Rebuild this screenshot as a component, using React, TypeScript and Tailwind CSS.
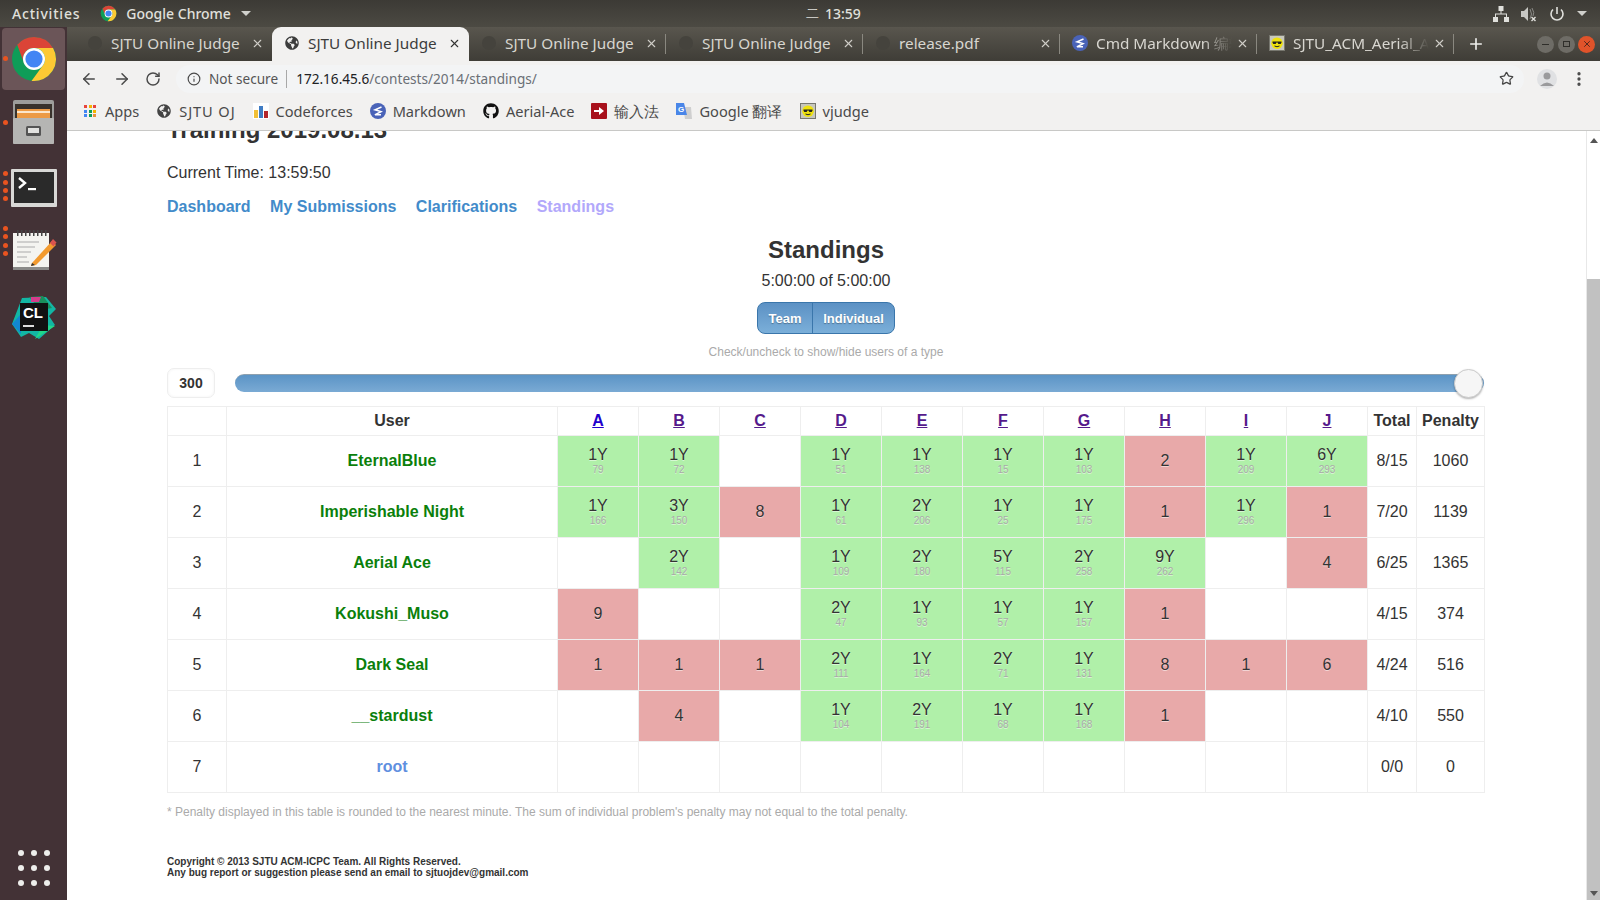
import { ArrowLeft, ArrowRight, Info, MoreVertical, Plus, RotateCw, Star, X } from "lucide-react";
import { FaGithub, FaGlobeAmericas } from "react-icons/fa";

type Cell = string | null;

const PROBLEMS = ["A", "B", "C", "D", "E", "F", "G", "H", "I", "J"];

// "1Y 79" is solved, tries then minutes. A lone number is failed attempts.
const ROWS: { name: string; root?: boolean; cells: Cell[]; total: string; penalty: string }[] = [
  { name: "EternalBlue", cells: ["1Y 79", "1Y 72", null, "1Y 51", "1Y 138", "1Y 15", "1Y 103", "2", "1Y 209", "6Y 293"], total: "8/15", penalty: "1060" },
  { name: "Imperishable Night", cells: ["1Y 166", "3Y 150", "8", "1Y 61", "2Y 206", "1Y 25", "1Y 175", "1", "1Y 296", "1"], total: "7/20", penalty: "1139" },
  { name: "Aerial Ace", cells: [null, "2Y 142", null, "1Y 109", "2Y 180", "5Y 115", "2Y 258", "9Y 262", null, "4"], total: "6/25", penalty: "1365" },
  { name: "Kokushi_Muso", cells: ["9", null, null, "2Y 47", "1Y 93", "1Y 57", "1Y 157", "1", null, null], total: "4/15", penalty: "374" },
  { name: "Dark Seal", cells: ["1", "1", "1", "2Y 111", "1Y 164", "2Y 71", "1Y 131", "8", "1", "6"], total: "4/24", penalty: "516" },
  { name: "__stardust", cells: [null, "4", null, "1Y 104", "2Y 191", "1Y 68", "1Y 168", "1", null, null], total: "4/10", penalty: "550" },
  { name: "root", root: true, cells: [null, null, null, null, null, null, null, null, null, null], total: "0/0", penalty: "0" },
];

function ChromeLogo({ size }: { size: number }) {
  return (
    <svg width={size} height={size} viewBox="0 0 48 48">
      <circle cx="24" cy="24" r="22" fill="#0f9d58" />
      <path d="M24 2a22 22 0 0 1 19.050 11H24a11 11 0 0 0-9.530 16.500L7.200 9.700A22 22 0 0 1 24 2z" fill="#db4437" />
      <path d="M43.050 13A22 22 0 0 1 21.500 45.900L33.530 29.500A11 11 0 0 0 24 13z" fill="#fcc934" />
      <circle cx="24" cy="24" r="11" fill="#fff" />
      <circle cx="24" cy="24" r="8.600" fill="#4285f4" />
    </svg>
  );
}

function MarkdownIcon() {
  return (
    <svg width="16" height="16" viewBox="0 0 16 16">
      <circle cx="8" cy="8" r="8" fill="#4a63b8" />
      <path d="M11.500 4L5 6.800 11 8.600 4.800 11.800M5 11.800h6" stroke="#fff" strokeWidth="1.500" fill="none" />
    </svg>
  );
}

function VjudgeIcon() {
  return (
    <svg width="16" height="16" viewBox="0 0 16 16">
      <rect width="16" height="16" fill="#77776f" />
      <rect x="1" y="1" width="14" height="14" fill="#c8c8bc" />
      <circle cx="8" cy="8.200" r="5.800" fill="#efe20c" />
      <path d="M3.500 6.500h9v1.200l-.8 1.300h-2.400L8.500 7.600h-1L6.700 9H4.300l-.8-1.300z" fill="#222" />
      <path d="M5.500 11q2.500 1.500 5 0" stroke="#222" fill="none" />
    </svg>
  );
}

function Tab({ title, icon, active, fade, noSep }: { title: string; icon?: React.ReactNode; active?: boolean; fade?: boolean; noSep?: boolean }) {
  return (
    <div
      className={`relative flex h-[34px] w-[197px] shrink-0 items-center pb-[2px] pl-[12px] pr-[8px] text-[15.300px] ${
        active ? "rounded-t-[9px] bg-[#f2f1f0] text-[#3c3c3c]" : "text-[#d8d6d0]"
      }`}
    >
      <div className="flex w-[16px] shrink-0 justify-center">
        {icon ?? <span className="size-[14px] rounded-full bg-[#45433d]" />}
      </div>
      <span
        className={`ml-[8px] flex-1 overflow-hidden whitespace-nowrap ${
          fade ? "[mask-image:linear-gradient(to_right,black_78%,transparent_100%)]" : ""
        }`}
      >
        {title}
      </span>
      <X size={13} strokeWidth={2} className={`ml-[4px] shrink-0 ${active ? "text-[#333]" : "text-[#d0cec8]"}`} />
      {!active && !noSep && <span className="absolute right-0 top-[7px] h-[20px] w-px bg-[#8a8880]" />}
    </div>
  );
}

function Bookmark({ icon, label, wide }: { icon: React.ReactNode; label: string; wide?: boolean }) {
  return (
    <div className="flex items-center gap-[7px]">
      <div className="flex w-[16px] justify-center">{icon}</div>
      <span className={wide ? "tracking-[0.9px]" : ""}>{label}</span>
    </div>
  );
}

function LauncherDots({ tops }: { tops: number[] }) {
  return (
    <>
      {tops.map((top) => (
        <span key={top} className="absolute left-[3px] size-[5px] rounded-full bg-[#e95420]" style={{ top }} />
      ))}
    </>
  );
}

function Dock() {
  return (
    <aside className="relative flex w-[67px] shrink-0 flex-col bg-[#433236]">
      <div className="mx-[2px] mt-[1px] flex h-[62px] items-center justify-center rounded-[4px] bg-[#6b5558]">
        <ChromeLogo size={48} />
      </div>
      <LauncherDots tops={[29]} />

      <div className="mt-[10px] flex h-[44px] justify-center">
        <svg width="41" height="44" viewBox="0 0 41 44">
          <rect x="0" y="0" width="41" height="44" rx="2" fill="#9d9d9b" />
          <rect x="2" y="4" width="37" height="18" fill="#38322c" />
          <rect x="4" y="9" width="33" height="9" fill="#ec9a45" />
          <rect x="4" y="11" width="33" height="2" fill="#fbe6cc" />
          <rect x="0" y="18" width="41" height="26" rx="1" fill="#b5b5b3" />
          <rect x="13" y="26" width="15" height="10" rx="1.500" fill="#555" />
          <rect x="15" y="28" width="11" height="5" fill="#e2e2e0" />
        </svg>
      </div>
      <LauncherDots tops={[93]} />

      <div className="mt-[25px] flex h-[38px] justify-center">
        <svg width="46" height="38" viewBox="0 0 46 38">
          <rect width="46" height="38" rx="1" fill="#d8d8d6" />
          <rect x="3" y="3" width="40" height="31" fill="#2a2a2a" />
          <path d="M8 9l6 5-6 5" stroke="#fff" strokeWidth="2.400" fill="none" />
          <rect x="17" y="19" width="8" height="2.200" fill="#fff" />
        </svg>
      </div>
      <LauncherDots tops={[144, 153, 161, 169]} />

      <div className="mt-[22px] flex h-[42px] justify-center">
        <svg width="46" height="42" viewBox="0 0 46 42">
          <rect x="2" y="4" width="36" height="36" fill="#f4f4f0" />
          <rect x="2" y="38" width="36" height="3" fill="#8a8a88" />
          {[6, 10, 14, 18, 22, 26, 30, 34].map((x) => (
            <rect key={x} x={x} y="1" width="1.500" height="6" fill="#444" />
          ))}
          <path d="M6 13h22M6 18h18M6 23h14M6 28h10M6 33h12" stroke="#aaa" strokeWidth="1.200" />
          <path d="M21 34l20-22 4 4-20 20-5 1z" fill="#f29a2e" />
          <path d="M39 14l3-4 3.500 3.500-3 4z" fill="#d9534f" />
          <path d="M20 37l1-3 3 2z" fill="#333" />
        </svg>
      </div>
      <LauncherDots tops={[199, 207, 216, 224]} />

      <div className="mt-[24px] flex h-[46px] justify-center">
        <svg width="46" height="46" viewBox="0 0 46 46">
          <path d="M1 29L11 3l24-1 10 12-7 7 6 9-16 14-10-6-8 4z" fill="#12b6a4" />
          <path d="M18 2l14-1 9 12-12 2z" fill="#1a8f5c" />
          <path d="M20 2l10 0-2 5h-8z" fill="#d43d8c" />
          <path d="M24 44l8-14 12 1z" fill="#21d789" />
          <path d="M1 29l9-10v20z" fill="#1287d0" />
          <rect x="9" y="8" width="28" height="28" fill="#111" />
          <text x="12" y="23" fill="#fff" fontSize="15" fontWeight="700" fontFamily="Liberation Sans">CL</text>
          <rect x="12" y="30" width="11" height="2" fill="#ddd" />
        </svg>
      </div>

      <div className="mt-auto mb-[14px] grid grid-cols-3 justify-items-center gap-y-[9px] px-[14px]">
        {Array.from({ length: 9 }).map((_, i) => (
          <span key={i} className="size-[6px] rounded-full bg-[#eeeeec]" />
        ))}
      </div>
    </aside>
  );
}

function Standings() {
  return (
    <table className="w-[1317px] table-fixed border-collapse text-[16px] leading-none text-[#333]">
      <colgroup>
        <col className="w-[59px]" />
        <col className="w-[331px]" />
        {PROBLEMS.map((p) => (
          <col key={p} className="w-[81px]" />
        ))}
        <col className="w-[49px]" />
        <col className="w-[68px]" />
      </colgroup>
      <thead>
        <tr className="h-[29px] font-bold">
          <th className="border border-[#eeeeee]" />
          <th className="border border-[#eeeeee]">User</th>
          {PROBLEMS.map((p) => (
            <th key={p} className={`border border-[#eeeeee] underline ${p === "A" ? "text-[#2200cc]" : "text-[#551a8b]"}`}>
              {p}
            </th>
          ))}
          <th className="border border-[#eeeeee]">Total</th>
          <th className="border border-[#eeeeee]">Penalty</th>
        </tr>
      </thead>
      <tbody>
        {ROWS.map((row, i) => (
          <tr key={row.name} className="h-[51px] text-center">
            <td className="border border-[#eeeeee]">{i + 1}</td>
            <td className={`border border-[#eeeeee] font-bold ${row.root ? "text-[#5f8fe0]" : "text-[#0b7f0b]"}`}>{row.name}</td>
            {row.cells.map((cell, j) => {
              if (!cell) return <td key={j} className="border border-[#eeeeee]" />;
              const [tries, time] = cell.split(" ");
              if (!time) {
                return (
                  <td key={j} className="border border-[#eeeeee] bg-[#e8a9a9] [text-shadow:0_1px_0_rgba(255,255,255,0.5)]">
                    {tries}
                  </td>
                );
              }
              return (
                <td key={j} className="border border-[#eeeeee] bg-[#b0f0a9] pb-[2px] [text-shadow:0_1px_0_rgba(255,255,255,0.5)]">
                  <div className="leading-[19px]">{tries}</div>
                  <div className="text-[10px] leading-[11px] text-[#aaaaaa]">{time}</div>
                </td>
              );
            })}
            <td className="border border-[#eeeeee]">{row.total}</td>
            <td className="border border-[#eeeeee]">{row.penalty}</td>
          </tr>
        ))}
      </tbody>
    </table>
  );
}

export default function App() {
  return (
    <div className="flex h-[900px] w-[1600px] flex-col overflow-hidden bg-white font-['Noto_Sans',sans-serif]">
      {/* gnome top bar */}
      <header className="flex h-[27px] shrink-0 items-center bg-gradient-to-b from-[#3c3a35] to-[#4c4a43] text-[14px] font-medium text-[#e0e0dc]">
        <span className="ml-[12px] tracking-[0.8px]">Activities</span>
        <div className="ml-[20px] flex items-center gap-[9px]">
          <ChromeLogo size={17} />
          <span>Google Chrome</span>
          <span className="ml-[1px] size-0 border-x-[5px] border-t-[5px] border-x-transparent border-t-[#d0d0cc]" />
        </div>
        <div className="ml-[555px] flex items-center gap-[6px]">
          <span className="text-[13px]">二</span>
          <span>13:59</span>
        </div>
        <div className="ml-auto mr-[13px] flex items-center gap-[12px]">
          <svg width="16" height="16" viewBox="0 0 16 16" fill="#e0e0dc">
            <rect x="5.500" y="0" width="5" height="5" />
            <rect x="0" y="11" width="5" height="5" />
            <rect x="11" y="11" width="5" height="5" />
            <path d="M7.500 5h1v2.500h5.500V11h-1V8.500H3V11H2V7.500h5.500z" />
          </svg>
          <svg width="16" height="16" viewBox="0 0 16 16" fill="#c8c8c4">
            <path d="M0 5h3l4-4v14l-4-4H0z" />
            <path d="M9 3q3 5 0 10M11 2q3 5 1 8" stroke="#8a8a86" fill="none" />
            <path d="M10.500 11l4 4m0-4l-4 4" stroke="#e0e0dc" strokeWidth="1.400" />
          </svg>
          <svg width="16" height="16" viewBox="0 0 16 16" fill="none" stroke="#e0e0dc" strokeWidth="1.600">
            <path d="M8 1v7" />
            <path d="M4 3.500a6 6 0 1 0 8 0" />
          </svg>
          <span className="size-0 border-x-[5px] border-t-[5px] border-x-transparent border-t-[#d0d0cc]" />
        </div>
      </header>

      <div className="flex min-h-0 flex-1">
        <Dock />

        <div className="flex min-w-0 flex-1 flex-col">
          {/* tab strip */}
          <div className="flex h-[34px] shrink-0 items-center bg-gradient-to-b from-[#59564e] to-[#3f3d37] pl-[8px]">
            <Tab title="SJTU Online Judge" noSep />
            <Tab title="SJTU Online Judge" active icon={<FaGlobeAmericas size={14} color="#3c3c3c" />} />
            <Tab title="SJTU Online Judge" />
            <Tab title="SJTU Online Judge" />
            <Tab title="release.pdf" />
            <Tab title="Cmd Markdown 编辑" fade icon={<MarkdownIcon />} />
            <Tab title="SJTU_ACM_Aerial_ACE" fade icon={<VjudgeIcon />} />
            <Plus size={18} strokeWidth={2.2} className="ml-[13px] text-[#eeeeec]" />
            <div className="ml-auto mr-[5px] flex gap-[3.500px]">
              <span className="flex size-[17px] items-center justify-center rounded-full bg-[#6e6c66]">
                <span className="h-[1px] w-[7px] bg-[#2f2e2a]" />
              </span>
              <span className="flex size-[17px] items-center justify-center rounded-full bg-[#6e6c66]">
                <span className="h-[6px] w-[7px] border border-[#2f2e2a]" />
              </span>
              <span className="flex size-[17px] items-center justify-center rounded-full bg-[#e0532a]">
                <X size={10} strokeWidth={2} className="text-[#3a201a]" />
              </span>
            </div>
          </div>

          {/* toolbar */}
          <div className="flex h-[35px] shrink-0 items-center bg-[#f2f1f0] pl-[13px] text-[#4a4a4a]">
            <ArrowLeft size={18} strokeWidth={2} />
            <ArrowRight size={18} strokeWidth={2} className="ml-[15px]" />
            <RotateCw size={16} strokeWidth={2.2} className="ml-[14px]" />
            <div className="ml-[15px] flex h-[28px] flex-1 items-center rounded-full bg-[#f3f4f5] pl-[11px] text-[13.600px]">
              <Info size={14} strokeWidth={2} />
              <span className="ml-[8px] pt-[2px] text-[#555]">Not secure</span>
              <span className="ml-[8px] h-[18px] w-px bg-[#a8a8a8]" />
              <span className="ml-[9px] pt-[2px] text-[#202124]">172.16.45.6</span>
              <span className="pt-[2px] text-[#6a6f75]">/contests/2014/standings/</span>
              <Star size={15} strokeWidth={2} className="ml-auto mr-[10px] text-[#444]" />
            </div>
            <div className="ml-[13px] flex size-[20px] items-center justify-center overflow-hidden rounded-full bg-[#e0e1e3]">
              <svg width="14" height="16" viewBox="0 0 14 16" fill="#9a9a9c">
                <circle cx="7" cy="5" r="3.500" />
                <path d="M0 15q7-7 14 0z" />
              </svg>
            </div>
            <MoreVertical size={18} strokeWidth={2.4} className="ml-[13px] mr-[12px]" />
          </div>

          {/* bookmarks */}
          <div className="flex h-[35px] shrink-0 items-center gap-[17px] border-b border-[#c8c8c6] bg-[#f2f1f0] pb-[3px] pl-[15px] text-[14.600px] text-[#4a4a4a]">
            <Bookmark
              label="Apps"
              icon={
                <div className="grid grid-cols-3 gap-[1.500px]">
                  {["#e8453c", "#f4b400", "#e8453c", "#4285f4", "#0f9d58", "#f4b400", "#4285f4", "#0f9d58", "#e8913c"].map((c, i) => (
                    <span key={i} className="size-[3px]" style={{ background: c }} />
                  ))}
                </div>
              }
            />
            <Bookmark label="SJTU OJ" wide icon={<FaGlobeAmericas size={14} color="#444" />} />
            <Bookmark
              label="Codeforces"
              icon={
                <svg width="16" height="16" viewBox="0 0 16 16">
                  <rect width="16" height="16" fill="#fff" />
                  <rect x="1" y="7" width="4" height="8" fill="#f2c037" />
                  <rect x="6" y="3" width="4" height="12" fill="#3f7cc4" />
                  <rect x="11" y="8" width="4" height="7" fill="#b3262c" />
                </svg>
              }
            />
            <Bookmark label="Markdown" icon={<MarkdownIcon />} />
            <Bookmark label="Aerial-Ace" icon={<FaGithub size={16} color="#111" />} />
            <Bookmark
              label="输入法"
              icon={
                <svg width="16" height="16" viewBox="0 0 16 16">
                  <rect width="16" height="16" rx="1" fill="#a8111c" />
                  <path d="M3 7h5V4l5 4-5 4V9H3z" fill="#fff" />
                </svg>
              }
            />
            <Bookmark
              label="Google 翻译"
              icon={
                <svg width="16" height="16" viewBox="0 0 16 16">
                  <path d="M7 4h8l1 12H9z" fill="#cfcfcf" />
                  <path d="M0 0h8l3 12H0z" fill="#4a86e8" />
                  <text x="2" y="9" fill="#fff" fontSize="8" fontWeight="700" fontFamily="Liberation Sans">G</text>
                </svg>
              }
            />
            <Bookmark label="vjudge" icon={<VjudgeIcon />} />
          </div>

          {/* page */}
          <div className="flex min-h-0 flex-1 font-['Liberation_Sans',sans-serif] text-[#333]">
            <main className="min-w-0 flex-1 overflow-hidden pl-[100px]">
              <h2 className="-mt-[15px] h-[28px] text-[24px] leading-[28px] font-bold">Training 2019.08.13</h2>
              <p className="mt-[20px] text-[16px] leading-[18px]">Current Time: 13:59:50</p>
              <nav className="mt-[16px] flex gap-[19.500px] text-[16px] leading-[18px] font-bold text-[#428bca]">
                <a>Dashboard</a>
                <a>My Submissions</a>
                <a>Clarifications</a>
                <a className="text-[#b2a8fb]">Standings</a>
              </nav>

              <div className="w-[1318px] text-center">
                <h3 className="mt-[20px] text-[24px] leading-[28px] font-bold">Standings</h3>
                <p className="mt-[8px] text-[16px] leading-[18px]">5:00:00 of 5:00:00</p>
                <div className="mt-[12px] inline-flex h-[32px] overflow-hidden rounded-[8px] border border-[#3a76ab] bg-gradient-to-b from-[#5c91c4] to-[#7bafd9] text-[13px] font-bold text-white [text-shadow:0_1px_1px_rgba(0,0,0,0.3)]">
                  <span className="flex w-[55px] items-center justify-center border-r border-[#3a76ab] pt-[2px]">Team</span>
                  <span className="flex w-[81px] items-center justify-center pt-[2px]">Individual</span>
                </div>
                <p className="mt-[11px] text-[12px] leading-[14px] text-[#aaaaaa]">Check/uncheck to show/hide users of a type</p>
              </div>

              <div className="mt-[9px] flex h-[30px] w-[1317px] items-center">
                <div className="flex h-[30px] w-[48px] items-center justify-center rounded-[7px] border border-[#eeeeee] text-[14px] font-bold shadow-[inset_0_0_3px_rgba(0,0,0,0.05)]">
                  300
                </div>
                <div className="relative ml-[20px] h-[18px] flex-1 rounded-full border-t border-[#8ea0ae] bg-gradient-to-b from-[#5b94c6] to-[#7aaad4]">
                  <span className="absolute -top-[6px] right-[1px] size-[29px] rounded-full border border-[#cccccc] bg-[#f6f6f6] shadow-[0_1px_2px_rgba(0,0,0,0.3)]" />
                </div>
              </div>

              <div className="mt-[8px]">
                <Standings />
              </div>

              <p className="mt-[12px] text-[12px] leading-[14px] text-[#aaaaaa]">
                * Penalty displayed in this table is rounded to the nearest minute. The sum of individual problem's penalty may not equal to the total penalty.
              </p>
              <p className="mt-[37px] text-[10px] leading-[11px] font-bold">
                Copyright © 2013 SJTU ACM-ICPC Team. All Rights Reserved.
                <br />
                Any bug report or suggestion please send an email to sjtuojdev@gmail.com
              </p>
            </main>

            {/* scrollbar */}
            <div className="flex w-[14px] shrink-0 flex-col border-l border-[#e8e8e8] bg-white">
              <div className="flex h-[18px] items-center justify-center">
                <span className="size-0 border-x-[4px] border-b-[5px] border-x-transparent border-b-[#555]" />
              </div>
              <div className="mt-[130px] flex-1 bg-[#c1c1c1]" />
              <div className="flex h-[14px] items-center justify-center bg-[#c1c1c1]">
                <span className="size-0 border-x-[4px] border-t-[5px] border-x-transparent border-t-[#555]" />
              </div>
            </div>
          </div>
        </div>
      </div>
    </div>
  );
}
